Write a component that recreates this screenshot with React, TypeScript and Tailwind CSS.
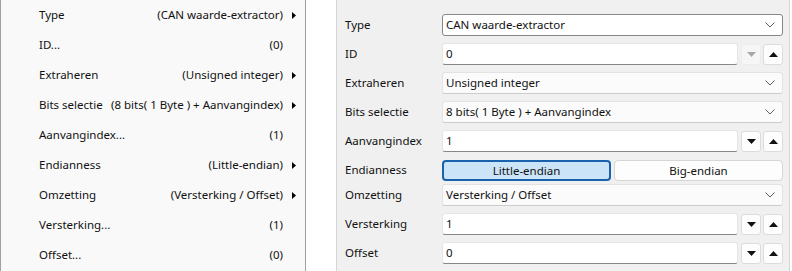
import React from "react";

const menuItems: { label: string; value: string; arrow: boolean }[] = [
  { label: "Type", value: "(CAN waarde-extractor)", arrow: true },
  { label: "ID...", value: "(0)", arrow: false },
  { label: "Extraheren", value: "(Unsigned integer)", arrow: true },
  { label: "Bits selectie", value: "(8 bits( 1 Byte ) + Aanvangindex)", arrow: true },
  { label: "Aanvangindex...", value: "(1)", arrow: false },
  { label: "Endianness", value: "(Little-endian)", arrow: true },
  { label: "Omzetting", value: "(Versterking / Offset)", arrow: true },
  { label: "Versterking...", value: "(1)", arrow: false },
  { label: "Offset...", value: "(0)", arrow: false },
];

function Chevron() {
  return (
    <svg width="10" height="6" viewBox="0 0 10 6" className="shrink-0">
      <polyline points="0.5,0.5 5,5 9.5,0.5" fill="none" stroke="#5f5f5f" strokeWidth="1" />
    </svg>
  );
}

function Select({ text, focused }: { text: string; focused?: boolean }) {
  return (
    <div
      className={
        focused
          ? "flex-1 h-[22px] flex items-center justify-between pl-[3px] pr-[7px] bg-white border border-[#868686] rounded-[3px]"
          : "flex-1 h-[22px] flex items-center justify-between pl-[3px] pr-[7px] bg-[#fbfbfb] border border-[#e3e3e3] border-b-[#cccccc] rounded-[3px]"
      }
    >
      <span className="whitespace-nowrap">{text}</span>
      <Chevron />
    </div>
  );
}

function Tri({ up, color }: { up: boolean; color: string }) {
  return (
    <svg width="9" height="5" viewBox="0 0 9 5">
      {up ? <polygon points="0,5 9,5 4.5,0" fill={color} /> : <polygon points="0,0 9,0 4.5,5" fill={color} />}
    </svg>
  );
}

function Spin({ text, disabledDown }: { text: string; disabledDown?: boolean }) {
  return (
    <div className="flex-1 flex items-center">
      <div className="flex-1 h-[22px] flex items-center pl-[3px] bg-white border border-[#e5e5e5] border-b-[#878787] rounded-[3px]">
        <span>{text}</span>
      </div>
      {disabledDown ? (
        <div className="ml-[3px] w-[20px] h-[21px] flex items-center justify-center bg-[#f6f6f6] border border-[#ededed] rounded-[3px]">
          <Tri up={false} color="#a8a8a8" />
        </div>
      ) : (
        <div className="ml-[3px] w-[20px] h-[21px] flex items-center justify-center bg-[#fdfdfd] border border-[#dcdcdc] rounded-[3px]">
          <Tri up={false} color="#111111" />
        </div>
      )}
      <div className="ml-[2px] w-[20px] h-[21px] flex items-center justify-center bg-[#fdfdfd] border border-[#dcdcdc] rounded-[3px]">
        <Tri up={true} color="#111111" />
      </div>
    </div>
  );
}

function Row({ label, mt, h, children }: { label: string; mt: string; h: string; children: React.ReactNode }) {
  return (
    <div className={`flex items-center ${mt} ${h}`}>
      <div className="w-[97px] shrink-0 whitespace-nowrap">{label}</div>
      {children}
    </div>
  );
}

export default function App() {
  return (
    <div
      className="w-[792px] h-[271px] flex bg-white overflow-hidden text-[11.5px] text-[#111111]"
      style={{ fontFamily: "'Noto Sans', sans-serif" }}
    >
      <div className="w-[306px] h-full shrink-0 border-l border-r border-[#a0a0a0] bg-[#f9f9f9] flex flex-col">
        {menuItems.map((it) => (
          <div key={it.label} className="h-[30px] flex items-center pl-[38px] pr-[9px] whitespace-nowrap">
            <span className="flex-1">{it.label}</span>
            <span>{it.value}</span>
            <span className="w-[13px] flex justify-end">
              {it.arrow && (
                <svg width="4" height="7" viewBox="0 0 4 7">
                  <polygon points="0,0 4,3.5 0,7" fill="#000" />
                </svg>
              )}
            </span>
          </div>
        ))}
      </div>
      <div className="w-[30px] shrink-0" />
      <div className="w-[454px] h-full shrink-0 border-l border-r border-[#d5d5d5] bg-[#f0f0f0] pl-[8px] pr-[6px] flex flex-col">
        <Row label="Type" mt="mt-[14px]" h="h-[22px]">
          <Select text="CAN waarde-extractor" focused />
        </Row>
        <Row label="ID" mt="mt-[7px]" h="h-[22px]">
          <Spin text="0" disabledDown />
        </Row>
        <Row label="Extraheren" mt="mt-[7px]" h="h-[22px]">
          <Select text="Unsigned integer" />
        </Row>
        <Row label="Bits selectie" mt="mt-[7px]" h="h-[22px]">
          <Select text="8 bits( 1 Byte ) + Aanvangindex" />
        </Row>
        <Row label="Aanvangindex" mt="mt-[7px]" h="h-[22px]">
          <Spin text="1" />
        </Row>
        <Row label="Endianness" mt="mt-[8px]" h="h-[19px]">
          <div className="flex-1 grid grid-cols-2 gap-[3px] h-[19px]">
            <div className="flex items-center justify-center bg-[#cce4f7] border-2 border-[#1a62ad] rounded-[4px]">Little-endian</div>
            <div className="flex items-center justify-center bg-[#fdfdfd] border border-[#d6d6d6] rounded-[4px]">Big-endian</div>
          </div>
        </Row>
        <Row label="Omzetting" mt="mt-[5px]" h="h-[22px]">
          <Select text="Versterking / Offset" />
        </Row>
        <Row label="Versterking" mt="mt-[7px]" h="h-[22px]">
          <Spin text="1" />
        </Row>
        <Row label="Offset" mt="mt-[7px]" h="h-[22px]">
          <Spin text="0" />
        </Row>
      </div>
    </div>
  );
}
